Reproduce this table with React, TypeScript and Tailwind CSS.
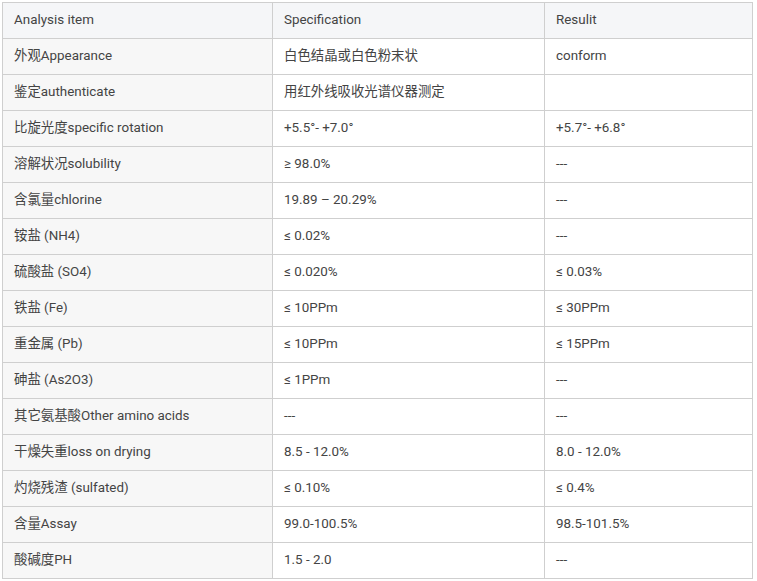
const rows: [string, string, string][] = [
  ["外观Appearance", "白色结晶或白色粉末状", "conform"],
  ["鉴定authenticate", "用红外线吸收光谱仪器测定", ""],
  ["比旋光度specific rotation", "+5.5°- +7.0°", "+5.7°- +6.8°"],
  ["溶解状况solubility", "≥ 98.0%", "---"],
  ["含氯量chlorine", "19.89 – 20.29%", "---"],
  ["铵盐 (NH4)", "≤ 0.02%", "---"],
  ["硫酸盐 (SO4)", "≤ 0.020%", "≤ 0.03%"],
  ["铁盐 (Fe)", "≤ 10PPm", "≤ 30PPm"],
  ["重金属 (Pb)", "≤ 10PPm", "≤ 15PPm"],
  ["砷盐 (As2O3)", "≤ 1PPm", "---"],
  ["其它氨基酸Other amino acids", "---", "---"],
  ["干燥失重loss on drying", "8.5 - 12.0%", "8.0 - 12.0%"],
  ["灼烧残渣 (sulfated)", "≤ 0.10%", "≤ 0.4%"],
  ["含量Assay", "99.0-100.5%", "98.5-101.5%"],
  ["酸碱度PH", "1.5 - 2.0", "---"],
];

const cell = "h-9 border border-[#cfcfcf] px-[11px] text-left align-middle font-normal";

export default function App() {
  return (
    <div className="min-h-[581px] w-[757px] bg-white pl-[2px] pt-[2px] text-[13.4px] text-[#444] [font-family:Roboto,'Noto_Sans_CJK_SC',sans-serif]">
      <table className="w-[750px] table-fixed border-collapse">
        <colgroup>
          <col className="w-[270px]" />
          <col className="w-[272px]" />
          <col className="w-[208px]" />
        </colgroup>
        <thead>
          <tr className="bg-[#f5f6f8]">
            <th className={cell}>Analysis item</th>
            <th className={cell}>Specification</th>
            <th className={cell}>Resulit</th>
          </tr>
        </thead>
        <tbody>
          {rows.map((r) => (
            <tr key={r[0]}>
              <td className={`${cell} bg-[#f7f7f7]`}>{r[0]}</td>
              <td className={cell}>{r[1]}</td>
              <td className={cell}>{r[2]}</td>
            </tr>
          ))}
        </tbody>
      </table>
    </div>
  );
}
